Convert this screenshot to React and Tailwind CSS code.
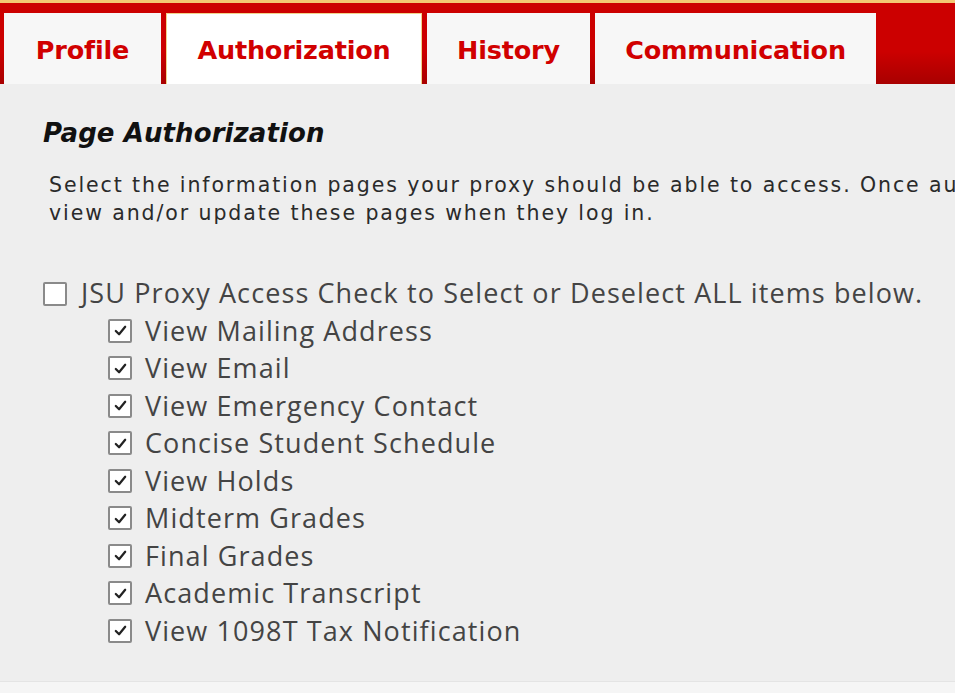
import React, { useState } from 'react';

const tabs = [
    { label: 'Profile', w: 'w-[157px]' },
    { label: 'Authorization', w: 'w-[256px]' },
    { label: 'History', w: 'w-[163px]' },
    { label: 'Communication', w: 'w-[281px]' },
];

const pages = [
    'View Mailing Address',
    'View Email',
    'View Emergency Contact',
    'Concise Student Schedule',
    'View Holds',
    'Midterm Grades',
    'Final Grades',
    'Academic Transcript',
    'View 1098T Tax Notification',
];

const Box = ({ checked, onClick }) => (
    <span
        onClick={onClick}
        className="w-[24px] h-[24px] shrink-0 border-2 border-[#8a8a8a] bg-white rounded-[2px] flex items-center justify-center cursor-pointer"
    >
        {checked && (
            <svg viewBox="0 0 16 16" className="w-[15px] h-[15px]" fill="none" stroke="#222" strokeWidth="2.4" strokeLinecap="round" strokeLinejoin="round">
                <polyline points="3 8.5 6.5 12 13 4" />
            </svg>
        )}
    </span>
);

export default function App() {
    const [active, setActive] = useState('Authorization');
    const [checked, setChecked] = useState(pages.map(() => true));
    const [all, setAll] = useState(false);

    const toggle = (i) => setChecked(c => c.map((v, j) => (j === i ? !v : v)));

    return (
        <div className="w-[955px] h-[693px] overflow-hidden bg-[#f5f5f5] font-['DejaVu_Sans',Verdana,sans-serif]">
            {/* tab bar */}
            <div className="border-t-[3px] border-[#f3c873] bg-gradient-to-b from-[#cc0000] from-60% to-[#a80000] flex items-end gap-[5px] pl-[4px] pt-[10px]">
                {tabs.map(t => (
                    <div
                        key={t.label}
                        onClick={() => setActive(t.label)}
                        className={`${t.w} h-[71px] shrink-0 flex items-center justify-center pt-[3px] cursor-pointer text-[25.5px] font-bold text-[#d10000] tracking-[-0.2px] ${active === t.label ? 'bg-white border-x border-t border-[#f0d48a]' : 'bg-[#f7f7f7]'}`}
                    >
                        {t.label}
                    </div>
                ))}
            </div>

            {/* content */}
            <div className="bg-[#eeeeee] h-[598px] pl-[43px] pt-[32px] border-b border-[#e4e4e4]">
                <h2 className="text-[26px] font-bold italic text-[#111] leading-[34px] tracking-[0.1px]">Page Authorization</h2>
                <p className="mt-[21px] ml-[6px] text-[20.5px] leading-[28px] text-[#2a2a2a] tracking-[1.9px] whitespace-nowrap">
                    Select the information pages your proxy should be able to access. Once authorized, your proxy can<br />
                    view and/or update these pages when they log in.
                </p>

                <div className="mt-[48px] text-[27px] text-[#444] tracking-[1.1px] font-['Open_Sans',sans-serif]">
                    <div className="flex items-center gap-[14px] h-[37px]">
                        <Box checked={all} onClick={() => { setAll(!all); setChecked(pages.map(() => !all)); }} />
                        <span className="whitespace-nowrap">JSU Proxy Access Check to Select or Deselect ALL items below.</span>
                    </div>
                    {pages.map((p, i) => (
                        <div key={p} className="flex items-center gap-[13px] h-[37.5px] pl-[65px]">
                            <Box checked={checked[i]} onClick={() => toggle(i)} />
                            <span className="whitespace-nowrap">{p}</span>
                        </div>
                    ))}
                </div>
            </div>
        </div>
    );
}
